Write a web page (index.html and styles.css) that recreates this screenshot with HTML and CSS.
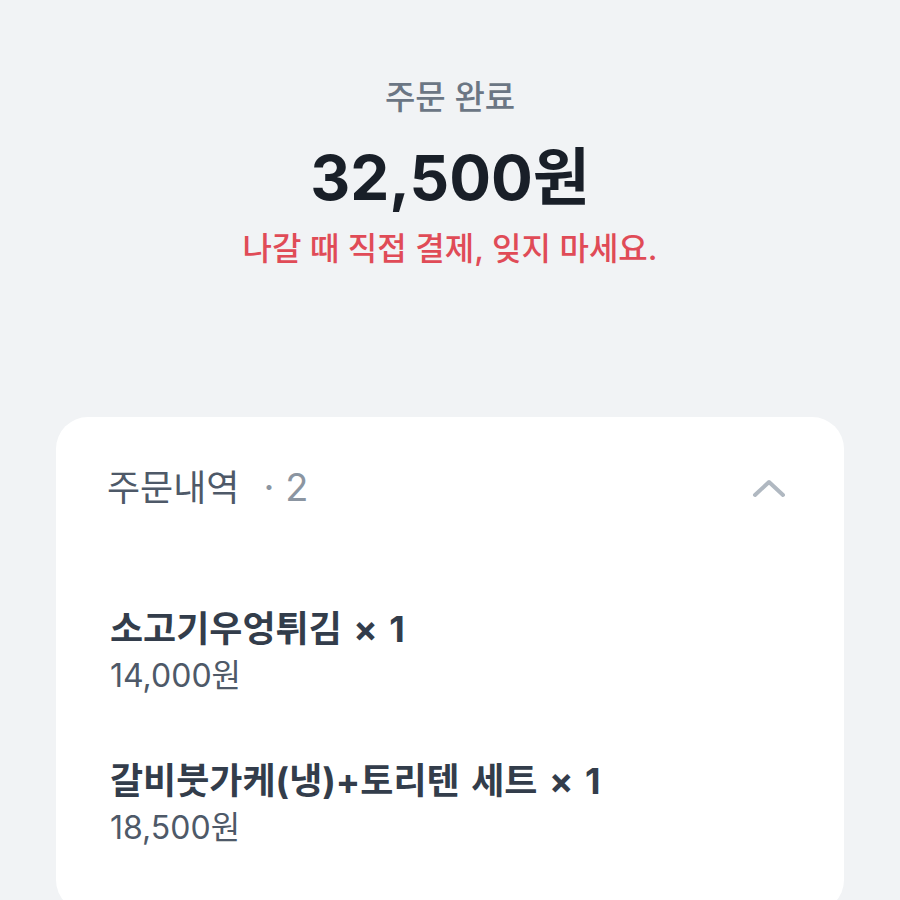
FILE: index.html
```html
<!DOCTYPE html>
<html lang="ko">
<head>
    <meta charset="UTF-8">
    <meta name="viewport" content="width=device-width, initial-scale=1.0">
    <title>주문 완료</title>
    <link rel="stylesheet" href="styles.css">
</head>
<body>
    <div class="summary">
        <p class="summary-label">주문 완료</p>
        <h1 class="summary-total">32,500원</h1>
        <p class="summary-note">나갈 때 직접 결제, 잊지 마세요.</p>
    </div>

    <div class="card">
        <div class="card-header">
            <h2 class="card-title">주문내역 <span class="count">· 2</span></h2>
            <svg class="chevron" width="34" height="20" viewBox="0 0 34 20">
                <path d="M3 17 L17 4 L31 17" fill="none" stroke="#b0b8c1" stroke-width="4" stroke-linecap="round" stroke-linejoin="round"/>
            </svg>
        </div>
        <ul class="items">
            <li class="item">
                <div class="item-name">소고기우엉튀김 × 1</div>
                <div class="item-price">14,000원</div>
            </li>
            <li class="item">
                <div class="item-name">갈비붓가케(냉)+토리텐 세트 × 1</div>
                <div class="item-price">18,500원</div>
            </li>
        </ul>
    </div>
</body>
</html>
```

FILE: styles.css
```css
body {
    margin: 0;
    background-color: #f1f3f5;
    font-family: Inter, "Noto Sans CJK KR", sans-serif;
    color: #191f28;
}
.summary {
    text-align: center;
    padding-top: 72px;
}
.summary-label {
    margin: 0;
    font-size: 33px;
    font-weight: 500;
    color: #6b7684;
    line-height: 50px;
}
.summary-total {
    margin: 16px 0 0;
    font-size: 62px;
    font-weight: 700;
    line-height: 80px;
    color: #191f28;
}
.summary-note {
    margin: 6px 0 0;
    font-size: 32px;
    font-weight: 500;
    line-height: 50px;
    color: #e04b57;
}
.card {
    margin: 143px 56px 0;
    background-color: white;
    border-radius: 32px;
    padding: 40px 56px 40px 51px;
    height: 495px;
    box-sizing: border-box;
}
.card-header {
    display: flex;
    justify-content: space-between;
    align-items: center;
}
.card-title {
    margin: 0;
    font-size: 36px;
    font-weight: 400;
    color: #4e5968;
    line-height: 60px;
}
.count {
    margin-left: 14px;
    font-size: 38px;
    color: #8b95a1;
}
.chevron {
    display: block;
    margin-right: 2px;
}
.items {
    list-style: none;
    margin: 87px 0 0;
    padding: 0;
}
.item {
    margin-bottom: 58px;
}
.item-name {
    font-size: 36px;
    font-weight: 700;
    color: #333d4b;
    line-height: 48px;
    word-spacing: 3px;
    padding-left: 3px;
}
.item-price {
    font-size: 32px;
    color: #4e5968;
    line-height: 46px;
    padding-left: 3px;
}
```
